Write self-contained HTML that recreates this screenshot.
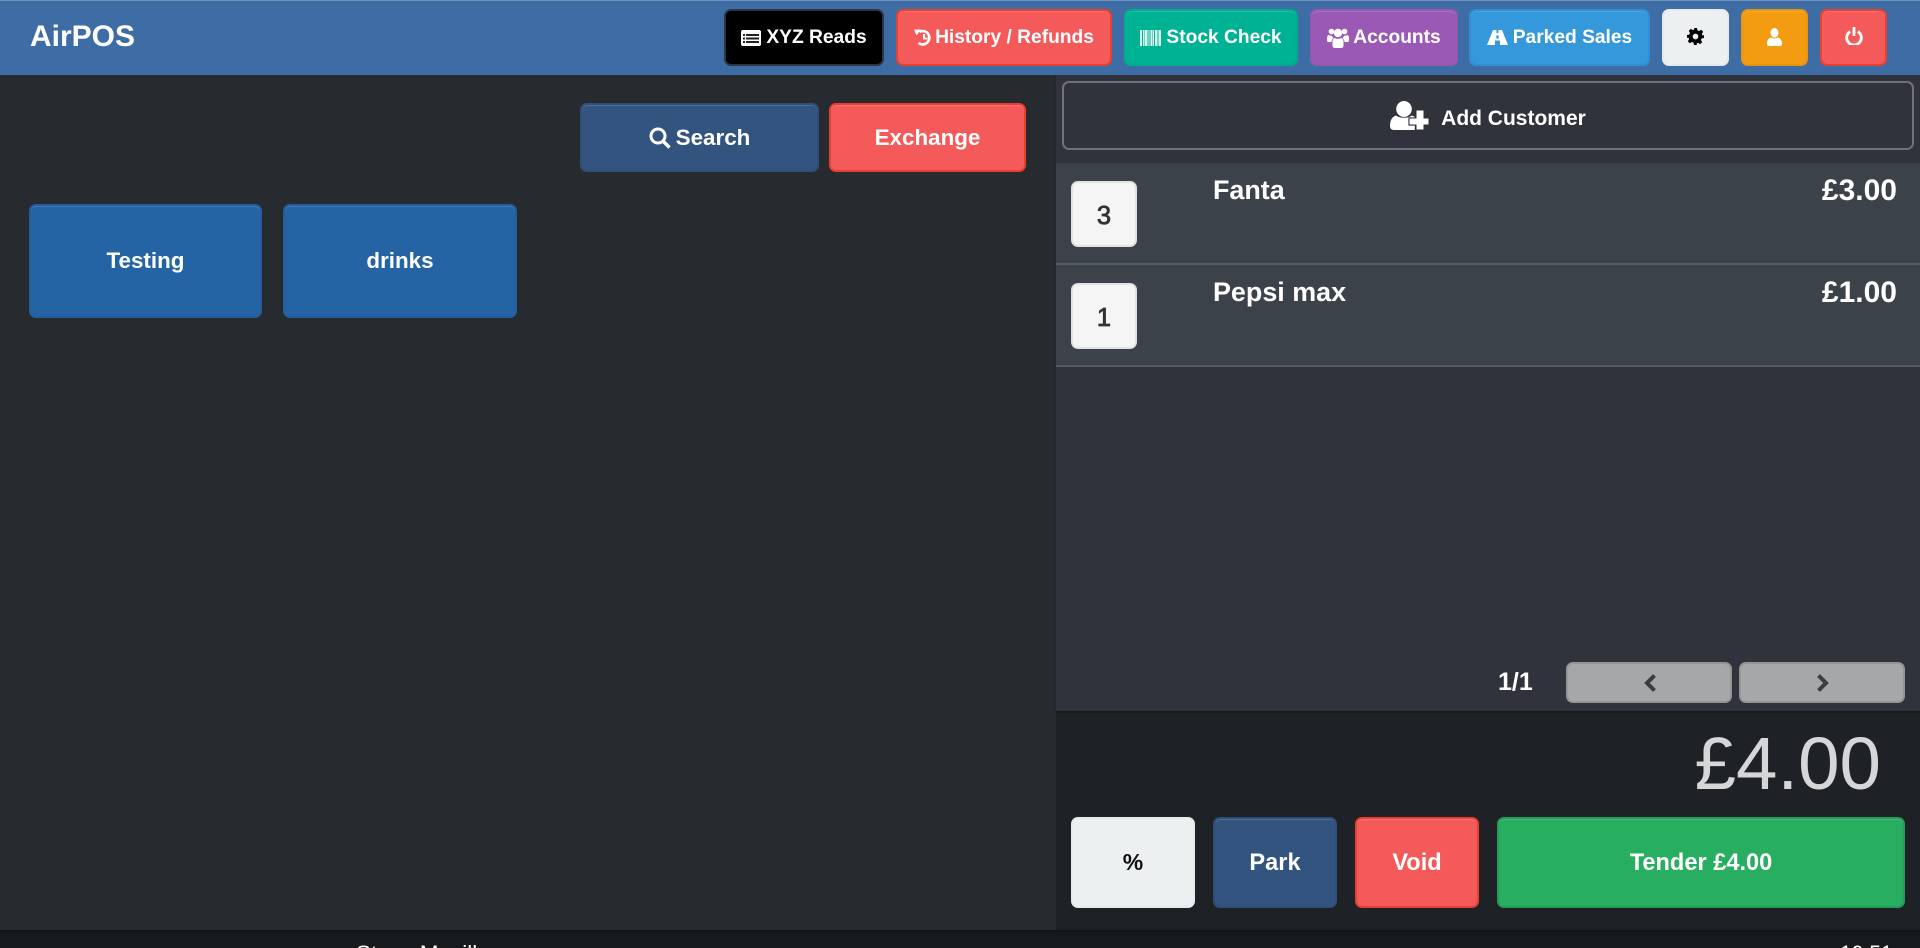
<!DOCTYPE html>
<html><head><meta charset="utf-8"><title>AirPOS</title>
<style>
html,body{margin:0;padding:0;width:1920px;height:948px;overflow:hidden;background:#272a2f;font-family:"Liberation Sans",sans-serif}
#w{position:relative;width:1920px;height:948px;overflow:hidden;background:#272a2f}
.a{position:absolute}
.b{position:absolute;box-sizing:border-box;display:flex;align-items:center;justify-content:center;font-weight:700;color:#fff;border:2px solid;border-radius:7px;box-shadow:inset 0 1px 0 rgba(255,255,255,.15);white-space:nowrap}
.t{font-size:19.2px}
svg{display:block;flex:none}
.row{position:absolute;left:1056px;width:864px;height:100px;background:#3c424a;border-bottom:2px solid #565a63}
.q{position:absolute;left:1071px;width:66px;height:66px;box-sizing:border-box;background:#f5f5f5;border:2px solid #e2e2e2;border-radius:7px;color:#333;font-size:25.500px;padding-top:5px;display:flex;align-items:center;justify-content:center;-webkit-text-stroke:.8px #333}
.n{position:absolute;left:1213px;font-size:26.9px;font-weight:700;color:#fff;line-height:30px;white-space:nowrap}
.p{position:absolute;right:23px;font-size:30px;font-weight:700;color:#fff;line-height:34px}
.d{padding-top:2px}
</style></head><body><div id="w">

<div class="a" style="left:0;top:0;width:1920px;height:75px;background:#3e6ca5;border-top:1px solid #6f93bf;box-sizing:border-box"></div>
<div class="a" style="left:30px;top:19px;font-size:30px;font-weight:700;color:#fff;line-height:36px">AirPOS</div>

<div class="b t" style="left:724px;top:9px;width:160px;height:57px;background:#000;border-color:#2a3545;gap:5px;box-shadow:none">
<svg width="20" height="16" viewBox="0 0 20 16"><rect width="20" height="16" rx="2" fill="#fff"/><path d="M2 4h2v2H2zM5 4h13v2H5zM2 7.500h2v2H2zM5 7.500h13v2H5zM2 11h2v2H2zM5 11h13v2H5z" fill="#222"/></svg>XYZ Reads</div>

<div class="b t" style="left:896px;top:9px;width:216px;height:57px;background:#f55a5a;border-color:#e8402f;gap:3px">
<svg width="18" height="17" viewBox="0 0 18 17" fill="none"><path d="M5.500 2.800A6.700 6.700 0 1 1 4.500 14" stroke="#fff" stroke-width="2.600"/><path d="M0 .5h7L2.500 6.500z" fill="#fff"/><path d="M10 5v4.500h3.500" stroke="#fff" stroke-width="2"/></svg>History / Refunds</div>

<div class="b t" style="left:1124px;top:9px;width:174px;height:57px;background:#00b294;border-color:#00ab8e;gap:5px">
<svg width="21" height="16" viewBox="0 0 21 16" fill="#fff"><path d="M0 0h2v16H0zM3 0h1.500v16H3zM5 0h2.500v16H5zM8.500 0h1v16h-1zM10.500 0h2v16h-2zM13 0h1v16h-1zM15 0h2v16h-2zM17.500 0h1v16h-1zM19 0h2v16h-2z" opacity=".85"/></svg>Stock Check</div>

<div class="b t" style="left:1310px;top:9px;width:148px;height:57px;background:#9b59b6;border-color:#9a58b4;gap:4px">
<svg width="22" height="20" viewBox="0 0 22 20" fill="#fff"><circle cx="4.500" cy="3.500" r="2.800"/><circle cx="17.500" cy="3.500" r="2.800"/><circle cx="11" cy="5" r="4.200"/><path d="M0 9.500c0-1.500 1-2.500 2-2.500 1 .8 2 .8 3 .8.300 1 1 2 1.500 2.500-1.200.6-2 2-2 3.700H1.500C.5 14 0 13.500 0 12.500zM22 9.500c0-1.500-1-2.500-2-2.500-1 .8-2 .8-3 .8-.3 1-1 2-1.500 2.500 1.200.6 2 2 2 3.700h3c1 0 1.500-.5 1.500-1.500z"/><path d="M5.500 13.500c0-2 1-3 2.300-3.500 1.800 1.200 4.600 1.200 6.400 0 1.300.5 2.300 1.500 2.300 3.500v4c0 1.500-1 2.500-2.500 2.500H8c-1.500 0-2.500-1-2.500-2.500z"/></svg>Accounts</div>

<div class="b t" style="left:1469px;top:9px;width:181px;height:57px;background:#3498db;border-color:#2f8fd2;gap:5px">
<svg width="21" height="15" viewBox="0 0 21 15" fill="#fff"><path d="M6 0h3.500v3h2V0H15l6 15h-8v-4.500H8V15H0zM9.300 5.500v3h2.400v-3z" fill-rule="evenodd"/></svg>Parked Sales</div>

<div class="b" style="left:1662px;top:9px;width:67px;height:57px;background:#ecf0f1;border-color:#e6eaeb">
<svg style="margin-bottom:2px" width="17" height="17" viewBox="0 0 24 24" fill="#000"><path fill-rule="evenodd" d="M10 0h4l.8 3.400 2.200.9 3-1.800 2.800 2.800-1.800 3 .9 2.200L24 10v4l-3.400.8-.9 2.200 1.800 3-2.800 2.800-3-1.800-2.200.9L14 24h-4l-.8-3.400-2.200-.9-3 1.800-2.800-2.800 1.800-3-.9-2.200L0 14v-4l3.400-.8.900-2.200-1.800-3 2.800-2.800 3 1.800 2.200-.9zM12 8a4 4 0 1 0 0 8 4 4 0 0 0 0-8z"/></svg></div>

<div class="b" style="left:1741px;top:9px;width:67px;height:57px;background:#f39c12;border-color:#e8950f">
<svg style="margin-bottom:1px" width="15" height="18" viewBox="0 0 15 18" fill="#fff"><ellipse cx="7.500" cy="4.800" rx="4" ry="4.800"/><path d="M0 16c0-3.500 1-5.500 4-6.500 1.500 1.300 5.500 1.300 7 0 3 1 4 3 4 6.500 0 1.200-.8 2-2 2H2c-1.200 0-2-.8-2-2z"/></svg></div>

<div class="b" style="left:1820px;top:9px;width:67px;height:57px;background:#f55a5a;border-color:#e8402f">
<svg style="margin-bottom:3px" width="18" height="18" viewBox="0 0 18 18" fill="none" stroke="#fff"><path d="M5.200 4.500a7.300 7.300 0 1 0 7.600 0" stroke-width="2.800"/><path d="M9 0v9" stroke-width="2.800"/></svg></div>

<!-- left -->
<div class="b" style="left:580px;top:103px;width:239px;height:69px;background:#32547f;border-color:#2f4f7a;font-size:22.400px;gap:5px">
<svg width="22" height="22" viewBox="0 0 22 22" fill="none" stroke="#fff"><circle cx="9" cy="9" r="7" stroke-width="3"/><path d="M14 14l6.500 6.500" stroke-width="3.400"/></svg>Search</div>
<div class="b" style="left:829px;top:103px;width:197px;height:69px;background:#f55a5a;border-color:#e8402f;font-size:22.400px">Exchange</div>
<div class="b" style="left:29px;top:204px;width:233px;height:114px;background:#2463a4;border-color:#245d9b;font-size:22.400px">Testing</div>
<div class="b" style="left:283px;top:204px;width:234px;height:114px;background:#2463a4;border-color:#245d9b;font-size:22.400px">drinks</div>

<!-- right -->
<div class="a" style="left:1055px;top:75px;width:865px;height:637px;background:#30333b;border-left:1px solid #24262b;box-sizing:border-box"></div>
<div class="b" style="left:1062px;top:81px;width:852px;height:69px;background:#30333b;border-color:#6f7174;color:#fff;font-size:21px;gap:12px;box-shadow:none">
<svg width="39" height="29" viewBox="0 0 39 29" fill="#fff"><ellipse cx="14" cy="8" rx="7.800" ry="8"/><path d="M0 25c0-6 2-9 6-10.500 4 3 12 3 16 0 1 .4 2 1 2.800 1.500V29H4c-2.500 0-4-1.500-4-4z"/><path d="M26 9h8v8h5v7h-5v5h-8v-5h-7v-7h7z" stroke="#30333b" stroke-width="1.200"/><path d="M26.500 9.500h7v8h5v6h-5v5h-7v-5h-7v-6h7z"/></svg><span style="position:relative;top:3px">Add Customer</span></div>

<div class="row" style="top:163px"></div>
<div class="row" style="top:265px"></div>
<div class="q" style="top:181px">3</div>
<div class="q" style="top:283px">1</div>
<div class="n" style="top:175px">Fanta</div>
<div class="n" style="top:277px">Pepsi max</div>
<div class="p" style="top:174px">£3.00</div>
<div class="p" style="top:276px">£1.00</div>

<div class="a" style="left:1498px;top:667px;font-size:25px;font-weight:700;color:#fff;line-height:30px">1/1</div>
<div class="b" style="left:1566px;top:662px;width:166px;height:41px;background:#a6a7a9;border-color:#949597;box-shadow:none">
<svg style="margin-left:2px" width="14" height="18" viewBox="0 0 14 18" fill="none" stroke="#3a3d42"><path d="M11.500 1.500L4 9l7.500 7.500" stroke-width="4"/></svg></div>
<div class="b" style="left:1739px;top:662px;width:166px;height:41px;background:#a6a7a9;border-color:#949597;box-shadow:none">
<svg style="margin-left:2px" width="14" height="18" viewBox="0 0 14 18" fill="none" stroke="#3a3d42"><path d="M2.500 1.500L10 9l-7.500 7.500" stroke-width="4"/></svg></div>

<div class="a" style="left:1056px;top:711px;width:864px;height:219px;background:#1e2125;border-top:2px solid #17191c;box-sizing:border-box"></div>
<div class="a" style="right:39px;top:718px;font-size:74.500px;line-height:92px;color:#d5d6d8">£4.00</div>

<div class="b" style="left:1071px;top:817px;width:124px;height:91px;background:#ecf0f1;border-color:#e6eaeb;color:#111;font-size:23px">%</div>
<div class="b d" style="left:1213px;top:817px;width:124px;height:91px;background:#32547f;border-color:#2f4f7a;font-size:23.600px">Park</div>
<div class="b d" style="left:1355px;top:817px;width:124px;height:91px;background:#f55a5a;border-color:#e8402f;font-size:23.600px">Void</div>
<div class="b d" style="left:1497px;top:817px;width:408px;height:91px;background:#27ae60;border-color:#259c58;font-size:23.600px">Tender £4.00</div>

<!-- footer -->
<div class="a" style="left:0;top:930px;width:1920px;height:18px;background:#171a1d;border-top:2px solid #131517;box-sizing:border-box;overflow:hidden"></div>
<div class="a" style="left:356px;top:941px;font-size:22.500px;line-height:26px;color:#fff;font-weight:400;white-space:nowrap">Steve Mcgill</div>
<div class="a" style="left:1840px;top:941px;font-size:21px;line-height:26px;color:#fff;white-space:nowrap">10:51</div>
</div></body></html>
